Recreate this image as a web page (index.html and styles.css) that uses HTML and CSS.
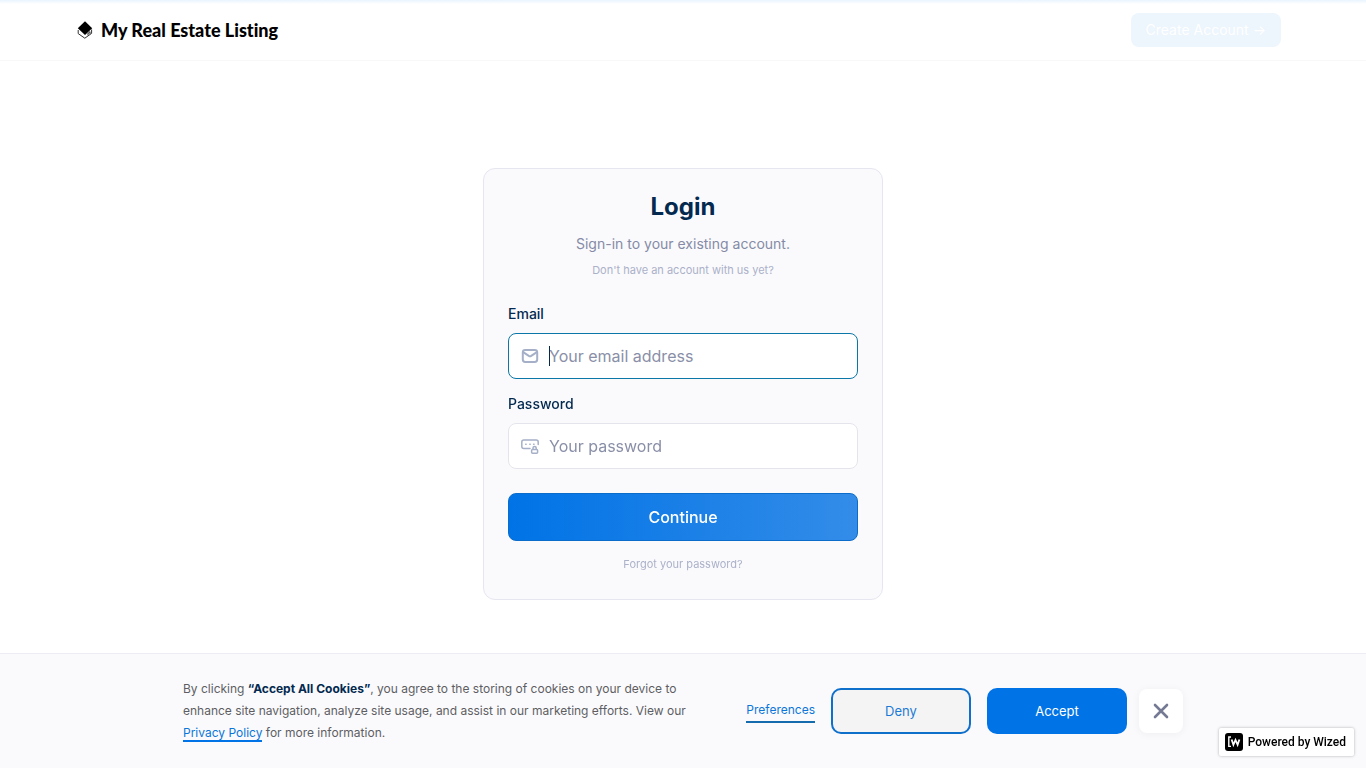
FILE: index.html
```html
<!DOCTYPE html>
<html lang="en">

<head>
  <meta charset="UTF-8">
  <meta name="viewport" content="width=device-width, initial-scale=1.0">
  <title>Login</title>
  <link rel="stylesheet" href="styles.css">
</head>

<body>
  <header class="navbar">
    <a class="brand" href="#">
      <svg class="brand-icon" width="16" height="18" viewBox="0 0 16 18" aria-hidden="true">
        <path d="M8 0.3L15.2 7.2L8 14L0.8 7.2Z" fill="#000" />
        <path d="M1.2 9V12.6L7.8 17.2L14.6 12.4V8.5M11 12V14.4M11 12.4L13 10.6V13" fill="none" stroke="#333" stroke-width="1" />
      </svg>
      <span>My Real Estate Listing</span>
    </a>
    <a class="create-account" href="#">Create Account →</a>
  </header>

  <main class="page">
    <form class="card">
      <h1 class="title">Login</h1>
      <p class="subtitle">Sign-in to your existing account.</p>
      <a class="small-link" href="#">Don't have an account with us yet?</a>

      <div class="fields">
        <div class="field">
          <label for="email">Email</label>
          <div class="input-wrap">
            <svg class="input-icon" width="18" height="18" viewBox="0 0 18 18" aria-hidden="true">
              <rect x="1.8" y="3" width="14.4" height="12" rx="2.4" />
              <path d="M2.5 5.4L7.8 8.8Q9 9.5 10.2 8.8L15.5 5.4" />
            </svg>
            <input type="email" id="email" placeholder="Your email address" autofocus>
            <span class="caret"></span>
          </div>
        </div>
        <div class="field">
          <label for="password">Password</label>
          <div class="input-wrap">
            <svg class="input-icon thin" width="18" height="18" viewBox="0 0 18 18" aria-hidden="true">
              <path d="M9 11.5H2.8Q0.8 11.5 0.8 9.5V5Q0.8 3 2.8 3H15.2Q17.2 3 17.2 5V7.5" />
              <path d="M4.7 7.2H5.1M8.8 7.2H9.2M12.6 7.2H13" />
              <rect x="10.6" y="12.4" width="6" height="3.8" rx="1" />
              <path d="M12 12.2V11Q12 9.4 13.6 9.4Q15.2 9.4 15.2 11V12.2" />
            </svg>
            <input type="password" id="password" placeholder="Your password">
          </div>
        </div>
      </div>

      <button class="submit" type="submit">Continue</button>
      <a class="small-link forgot" href="#">Forgot your password?</a>
    </form>
  </main>

  <section class="cookies" aria-label="Cookies">
    <div class="cookies-inner">
      <p class="cookies-text">By clicking <strong>“Accept All Cookies”</strong>, you agree to the storing of cookies on your device to enhance site navigation, analyze site usage, and assist in our marketing efforts. View our <a href="#">Privacy Policy</a> for more information.</p>
      <div class="cookies-actions">
        <a class="preferences" href="#">Preferences</a>
        <button class="btn btn-deny" type="button">Deny</button>
        <button class="btn btn-accept" type="button">Accept</button>
        <button class="btn-close" type="button" aria-label="Close">
          <svg width="16" height="16" viewBox="0 0 16 16" aria-hidden="true">
            <path d="M2 2L14 14M14 2L2 14" />
          </svg>
        </button>
      </div>
    </div>
  </section>

  <a class="badge" href="#">
    <svg width="18" height="18" viewBox="0 0 18 18" aria-hidden="true">
      <rect width="18" height="18" rx="3" fill="#000" />
      <path d="M6 4H3.8V13.4H6" fill="none" stroke="#fff" stroke-width="1.4" />
      <path d="M6.6 6.5L8.4 11.8L10.5 7L12.6 11.8L14.4 6.5" fill="none" stroke="#fff" stroke-width="1.8" />
    </svg>
    <span>Powered by Wized</span>
  </a>
</body>

</html>
```

FILE: styles.css
```css
* {
  box-sizing: border-box;
}

body {
  margin: 0;
  color: #03294f;
  background-color: #fff;
  font-family: Inter, "Liberation Sans", sans-serif;
  font-size: 14px;
  line-height: 22px;
}

a {
  text-decoration: none;
}

.navbar {
  position: fixed;
  top: 0;
  left: 0;
  right: 0;
  display: flex;
  align-items: center;
  justify-content: space-between;
  height: 61px;
  padding: 0 85px 0 77px;
  background: linear-gradient(#e8f4fe, #fff 4px);
  border-bottom: 1px solid #f8f8fa;
}

.brand {
  display: flex;
  align-items: center;
  gap: 8px;
  color: #000;
  font-family: Lato, sans-serif;
  font-size: 18px;
  font-weight: 900;
  font-variant-ligatures: none;
}

.create-account {
  padding: 6px 15px;
  border-radius: 8px;
  color: #fff;
  background-color: #edf5fd;
}

.page {
  display: flex;
  align-items: center;
  justify-content: center;
  min-height: 100vh;
}

.card {
  display: flex;
  flex-direction: column;
  width: 400px;
  max-width: 100%;
  padding: 24px;
  border: 1px solid #e6e6f0;
  border-radius: 12px;
  background-color: #fafafd;
  text-align: center;
}

.title {
  margin: 0 0 12px;
  font-size: 24px;
  line-height: 28px;
  font-weight: 700;
}

.subtitle {
  margin: 0 0 4px;
  color: #858ba5;
}

.small-link {
  color: #abb1c8;
  font-size: 11px;
}

.fields {
  display: flex;
  flex-direction: column;
  gap: 14px;
  margin: 22px 0 24px;
  text-align: left;
}

.field label {
  display: block;
  margin-bottom: 8px;
  font-weight: 500;
}

.input-wrap {
  display: grid;
  align-items: center;
}

.input-wrap > * {
  grid-area: 1 / 1;
}

.input-icon {
  z-index: 1;
  margin-left: 13px;
  fill: none;
  stroke: #a5afc8;
  stroke-width: 2;
  stroke-linecap: round;
  stroke-linejoin: round;
}

.input-icon.thin {
  stroke-width: 1.5;
}

.field input {
  width: 100%;
  height: 46px;
  padding: 0 16px 0 40px;
  border: 1px solid #e4e4ec;
  border-radius: 8px;
  outline: none;
  color: #03294f;
  background-color: #fff;
  caret-color: transparent;
  font-family: inherit;
  font-size: 16px;
}

.field input:focus {
  border-color: #0b76a8;
}

.field input::placeholder {
  color: #8a8fa8;
}

.caret {
  width: 1px;
  height: 20px;
  margin-left: 41px;
  background-color: #03294f;
  pointer-events: none;
}

.submit {
  height: 48px;
  border: 1px solid #0c6cc9;
  border-radius: 8px;
  color: #fff;
  background: linear-gradient(90deg, #0073e6, #338ce8) border-box;
  font-family: inherit;
  font-size: 16px;
  font-weight: 500;
}

.forgot {
  margin-top: 12px;
}

.cookies {
  position: fixed;
  left: 0;
  right: 0;
  bottom: 0;
  padding: 24px;
  border-top: 1px solid #ececf2;
  background-color: #fafafd;
}

.cookies-inner {
  display: flex;
  align-items: center;
  justify-content: space-between;
  max-width: 1000px;
  margin: 0 auto;
}

.cookies-text {
  max-width: 515px;
  margin: 0;
  color: #5e5e62;
  font-size: 12px;
}

.cookies-text strong {
  color: #03294f;
}

.cookies-text a {
  border-bottom: 2px solid #0073e6;
  color: #0b76d8;
}

.cookies-actions {
  display: flex;
  align-items: center;
  gap: 16px;
}

.preferences {
  border-bottom: 2px solid #146cae;
  color: #0b76d8;
  font-size: 12px;
}

.btn {
  width: 140px;
  height: 46px;
  border: 2px solid #0073e6;
  border-radius: 10px;
  font-family: inherit;
  font-size: 13px;
}

.btn-deny {
  border-color: #0f70cc;
  color: #1c7bd4;
  background-color: #f4f4f4;
}

.btn-accept {
  color: #fff;
  background-color: #0073e6;
}

.btn-close {
  display: flex;
  align-items: center;
  justify-content: center;
  width: 44px;
  height: 44px;
  margin-left: -4px;
  padding: 0;
  border: 0;
  border-radius: 8px;
  background-color: #fff;
  box-shadow: 0 1px 8px rgba(0, 0, 0, .05);
}

.btn-close svg {
  fill: none;
  stroke: #747994;
  stroke-width: 2.6;
  stroke-linecap: round;
}

.badge {
  position: fixed;
  right: 12px;
  bottom: 12px;
  display: flex;
  align-items: center;
  gap: 5px;
  padding: 4px 8px 4px 6px;
  border-radius: 2px;
  color: #000;
  background-color: #fff;
  box-shadow: 0 0 3px rgba(0, 0, 0, .3);
  font-family: Roboto, sans-serif;
  font-size: 12px;
  line-height: 20px;
  font-weight: 500;
}
```
